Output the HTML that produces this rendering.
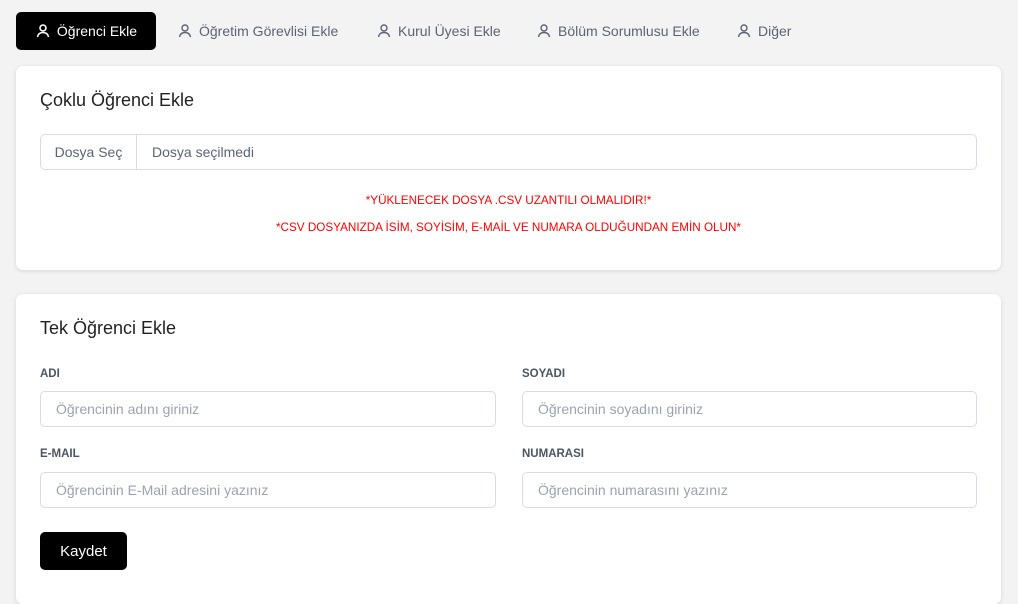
<!DOCTYPE html><html><head><meta charset="utf-8"><style>
*{box-sizing:border-box;margin:0;padding:0}
body{width:1018px;height:588px;overflow:hidden;background:#f3f3f3;font-family:"Liberation Sans",sans-serif;color:#222;position:relative}
.tab{position:absolute;top:12px;height:38px;display:flex;align-items:center;font-size:14px;color:#5b6475;gap:6px}
.tab svg{width:16px;height:16px}
.act{left:16px;width:140px;background:#000;color:#fff;border-radius:5px;justify-content:center}
.card{position:absolute;left:16px;width:985px;background:#fff;border-radius:7px;box-shadow:0 1px 4px rgba(0,0,0,.12)}
h2{position:absolute;left:24px;font-size:18px;font-weight:normal;color:#222}
.file{position:absolute;left:24px;top:68px;width:937px;height:36px;border:1px solid #d9dde3;border-radius:5px;font-size:14px;color:#5b6475;display:flex;align-items:center}
.file span:first-child{width:96px;height:100%;border-right:1px solid #d9dde3;display:flex;align-items:center;justify-content:center}
.file span+span{padding-left:15px}
.red{position:absolute;left:0;width:100%;text-align:center;color:#f00;font-size:11.7px}
.lab{position:absolute;font-size:11.5px;color:#4b5563;font-weight:bold}
.inp{position:absolute;width:456px;height:36px;border:1px solid #d9dde3;border-radius:5px;font-size:14px;color:#9ca3af;padding-left:15px;line-height:34px}
.btn{position:absolute;left:24px;top:238px;width:87px;height:38px;background:#000;color:#fff;border-radius:5px;font-size:15px;display:flex;align-items:center;justify-content:center}
</style></head><body>
<div class="tab act"><svg viewBox="0 0 16 16" fill="none" stroke="currentColor" stroke-width="1.6"><circle cx="8" cy="5" r="3"/><path d="M2.5 14c.5-3 2.7-4.5 5.5-4.5s5 1.5 5.5 4.5"/></svg>Öğrenci Ekle</div>
<div class="tab" style="left:177px"><svg viewBox="0 0 16 16" fill="none" stroke="currentColor" stroke-width="1.4"><circle cx="8" cy="5" r="3"/><path d="M2.5 14c.5-3 2.7-4.5 5.5-4.5s5 1.5 5.5 4.5"/></svg>Öğretim Görevlisi Ekle</div>
<div class="tab" style="left:376px"><svg viewBox="0 0 16 16" fill="none" stroke="currentColor" stroke-width="1.4"><circle cx="8" cy="5" r="3"/><path d="M2.5 14c.5-3 2.7-4.5 5.5-4.5s5 1.5 5.5 4.5"/></svg>Kurul Üyesi Ekle</div>
<div class="tab" style="left:536px"><svg viewBox="0 0 16 16" fill="none" stroke="currentColor" stroke-width="1.4"><circle cx="8" cy="5" r="3"/><path d="M2.5 14c.5-3 2.7-4.5 5.5-4.5s5 1.5 5.5 4.5"/></svg>Bölüm Sorumlusu Ekle</div>
<div class="tab" style="left:736px"><svg viewBox="0 0 16 16" fill="none" stroke="currentColor" stroke-width="1.4"><circle cx="8" cy="5" r="3"/><path d="M2.5 14c.5-3 2.7-4.5 5.5-4.5s5 1.5 5.5 4.5"/></svg>Diğer</div>
<div class="card" style="top:66px;height:204px">
<h2 style="top:24px">Çoklu Öğrenci Ekle</h2>
<div class="file"><span>Dosya Seç</span><span>Dosya seçilmedi</span></div>
<div class="red" style="top:128px">*YÜKLENECEK DOSYA .CSV UZANTILI OLMALIDIR!*</div>
<div class="red" style="top:155px">*CSV DOSYANIZDA İSİM, SOYİSİM, E-MAİL VE NUMARA OLDUĞUNDAN EMİN OLUN*</div>
</div>
<div class="card" style="top:294px;height:310px">
<h2 style="top:24px">Tek Öğrenci Ekle</h2>
<div class="lab" style="left:24px;top:74px">ADI</div>
<div class="lab" style="left:506px;top:74px">SOYADI</div>
<div class="inp" style="left:24px;top:97px">Öğrencinin adını giriniz</div>
<div class="inp" style="left:506px;top:97px;width:455px">Öğrencinin soyadını giriniz</div>
<div class="lab" style="left:24px;top:154px">E-MAIL</div>
<div class="lab" style="left:506px;top:154px">NUMARASI</div>
<div class="inp" style="left:24px;top:178px">Öğrencinin E-Mail adresini yazınız</div>
<div class="inp" style="left:506px;top:178px;width:455px">Öğrencinin numarasını yazınız</div>
<div class="btn">Kaydet</div>
</div>
</body></html>
